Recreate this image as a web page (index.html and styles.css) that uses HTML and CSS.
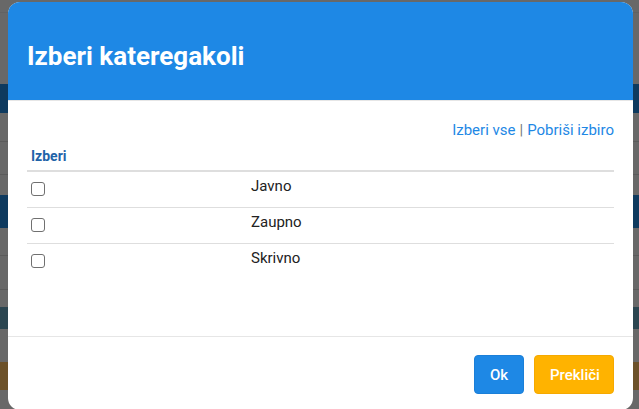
FILE: index.html
```html
<!DOCTYPE html>
<html lang="sl">
<head>
<meta charset="utf-8">
<title>Izberi kateregakoli</title>
<link rel="stylesheet" href="styles.css">
</head>
<body>
  <div class="page">
    <div class="band band-top"><span class="rule rule-12"></span></div>
    <div class="band band-blue"></div>
    <div class="band band-mid"><span class="rule"></span><span class="rule"></span></div>
    <div class="band band-blue band-blue2"></div>
    <div class="band band-mid2"><span class="rule"></span><span class="rule"></span></div>
    <div class="band band-teal"></div>
    <div class="band band-gap"></div>
    <div class="band band-brown"></div>
    <div class="band band-end"></div>
  </div>

  <div class="modal" role="dialog" aria-labelledby="modal-title">
    <header class="modal-header">
      <h1 id="modal-title" class="modal-title">Izberi kateregakoli</h1>
    </header>

    <section class="modal-body">
      <div class="select-links">
        <a href="#" class="link">Izberi vse</a>
        <span class="sep">|</span>
        <a href="#" class="link">Pobriši izbiro</a>
      </div>

      <table class="choice-table">
        <thead>
          <tr>
            <th class="col-check">Izberi</th>
            <th></th>
          </tr>
        </thead>
        <tbody>
          <tr>
            <td class="col-check"><input type="checkbox" class="check"></td>
            <td>Javno</td>
          </tr>
          <tr>
            <td class="col-check"><input type="checkbox" class="check"></td>
            <td>Zaupno</td>
          </tr>
          <tr>
            <td class="col-check"><input type="checkbox" class="check"></td>
            <td>Skrivno</td>
          </tr>
        </tbody>
      </table>
    </section>

    <footer class="modal-footer">
      <button class="btn btn-primary">Ok</button>
      <button class="btn btn-warning">Prekliči</button>
    </footer>
  </div>
</body>
</html>
```

FILE: styles.css
```css
* {
  box-sizing: border-box;
}

html,
body {
  margin: 0;
  padding: 0;
  height: 409px;
  overflow: hidden;
}

body {
  font-family: Roboto, "Liberation Sans", Arial, sans-serif;
  font-size: 14px;
  color: #222;
  background: #686868;
  position: relative;
}

/* dimmed page behind the dialog */
.page {
  display: flex;
  flex-direction: column;
  height: 409px;
}

.band {
  background: #686868;
  display: flex;
  flex-direction: column;
}

.band-top { height: 84px; }
.band-blue { height: 29px; background: #0e3a5f; }
.band-mid { height: 82px; padding-top: 28px; gap: 32px; }
.band-blue2 { height: 33px; }
.band-mid2 { height: 79px; padding-top: 27px; gap: 33px; }
.band-teal { height: 22px; background: #2b4550; }
.band-gap { height: 33px; }
.band-brown { height: 28px; background: #6c5129; }
.band-end { flex: 1; }

.rule {
  display: block;
  height: 1px;
  background: #5b5b5b;
}

.rule-12 {
  margin-top: 12px;
  background: #626262;
}

/* dialog */
.modal {
  position: absolute;
  left: 8px;
  top: 2px;
  width: 625px;
  height: 408px;
  background: #fff;
  border-radius: 12px;
  overflow: hidden;
  display: flex;
  flex-direction: column;
}

.modal-header {
  height: 99px;
  background: #1e88e5;
  border-bottom: 1px solid #e6e6e6;
  padding: 39px 19px 0;
}

.modal-title {
  margin: 0;
  color: #fff;
  font-size: 26px;
  line-height: 30px;
  font-weight: 700;
}

.modal-body {
  flex: 1;
  padding: 19px 19px 0;
}

.select-links {
  display: flex;
  justify-content: flex-end;
  gap: 4px;
  line-height: 20px;
  font-size: 15px;
}

.link {
  color: #1e88e5;
  text-decoration: none;
}

.sep {
  color: #777;
}

.choice-table {
  width: 100%;
  margin-top: 6px;
  border-collapse: collapse;
}

.choice-table th {
  text-align: left;
  color: #1f63a8;
  font-weight: 700;
  font-size: 14px;
  line-height: 20px;
  padding: 0 4px 4px;
  border-bottom: 2px solid #dedede;
}

.choice-table td {
  padding: 4px 4px 11px;
  line-height: 20px;
  font-size: 15px;
  color: #222;
  vertical-align: top;
}

.choice-table tbody tr + tr td {
  border-top: 1px solid #dedede;
}

.col-check {
  width: 220px;
}

/* square checkbox with a soft grey outline */
.check {
  appearance: none;
  -webkit-appearance: none;
  display: block;
  width: 14px;
  height: 14px;
  margin: 6px 0 0;
  border: 1px solid #707070;
  border-radius: 3px;
  background: #fff;
}

.modal-footer {
  border-top: 1px solid #e6e6e6;
  display: flex;
  justify-content: flex-end;
  gap: 10px;
  padding: 18px 19px 0;
  height: 74px;
}

.btn {
  height: 39px;
  padding: 0 15px;
  border-radius: 4px;
  border: 1px solid transparent;
  color: #fff;
  font-family: Roboto, "Liberation Sans", Arial, sans-serif;
  font-size: 15px;
  font-weight: 500;
}

.btn-primary {
  width: 50px;
  background: #1e88e5;
  border-color: #1b7fd8;
}

.btn-warning {
  width: 80px;
  background: #ffb300;
  border-color: #f5a900;
}
```
